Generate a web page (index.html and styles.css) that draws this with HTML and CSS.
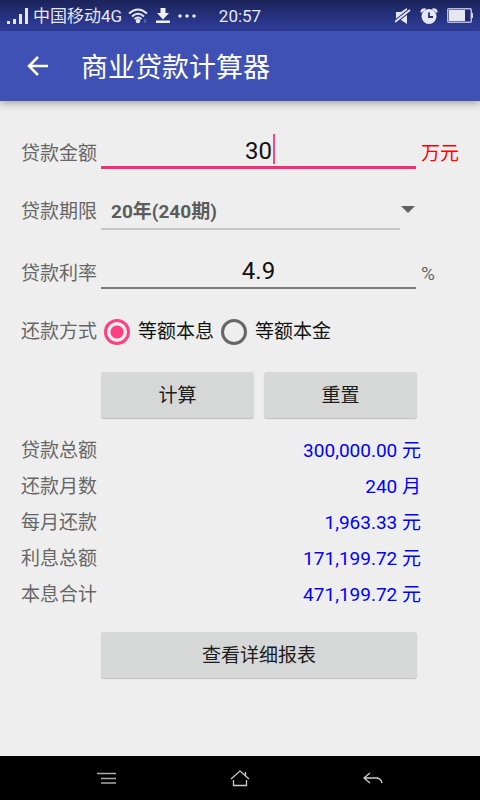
FILE: index.html
```html
<!DOCTYPE html>
<html lang="zh-CN">
<head>
<meta charset="utf-8">
<meta name="viewport" content="width=device-width, initial-scale=1">
<title>商业贷款计算器</title>
<link rel="stylesheet" href="styles.css">
</head>
<body>
<div class="status-bar">
  <div class="status-left">
    <svg width="22" height="16" viewBox="0 0 22 16" fill="#e6e7f4" aria-hidden="true"><path d="M0 13h3v3H0zM6 11h3v5H6zM12 6h3v10h-3zM18 0h3v16h-3z"/></svg>
    <span class="carrier">中国移动4G</span>
    <svg width="20" height="16" viewBox="0 0 20 16" fill="none" stroke="#e6e7f4" stroke-width="2" aria-hidden="true"><path d="M1 5.500Q10-2.500 19 5.500M4 8.500Q10 3 16 8.500M6.500 11Q10 8 13.500 11"/><circle cx="10" cy="13" r="2.300" fill="#e6e7f4" stroke="none"/><path d="M16 12h2M16 14h2" stroke="#7f86bd" stroke-width="1"/></svg>
    <svg width="14" height="15" viewBox="0 0 14 15" fill="#f0f1fa" aria-hidden="true"><path d="M4.500 0h5v5H13l-6 6.500L1 5h3.500zM0 12.500h14V15H0z"/></svg>
    <svg width="18" height="4" viewBox="0 0 18 4" fill="#e6e7f4" aria-hidden="true"><circle cx="2" cy="2" r="1.800"/><circle cx="9" cy="2" r="1.800"/><circle cx="16" cy="2" r="1.800"/></svg>
  </div>
  <span class="clock">20:57</span>
  <div class="status-right">
    <svg width="16" height="16" viewBox="0 0 16 16" aria-hidden="true"><path d="M1 4h5l6-4v16l-6-4H1z" fill="#e6e7f4"/><path d="M0 14 15 2" stroke="#26307c" stroke-width="4"/><path d="M0 14 15 2" stroke="#e6e7f4" stroke-width="1.800"/></svg>
    <svg width="18" height="16" viewBox="0 0 18 16" aria-hidden="true"><path d="M1.500 4.500Q1.500 1 5.500 1.500M16.500 4.500Q16.500 1 12.500 1.500" fill="none" stroke="#e6e7f4" stroke-width="2.400"/><circle cx="9" cy="8.500" r="7.500" fill="#e6e7f4"/><path d="M9 4.500v4.500h4" fill="none" stroke="#26307c" stroke-width="1.800"/></svg>
    <svg width="26" height="15" viewBox="0 0 26 15" aria-hidden="true"><rect x=".75" y=".75" width="23.500" height="13.500" rx="1" fill="#202a74" stroke="#b9bcda" stroke-width="1.500"/><path d="M2 2h16v11H2z" fill="#e6e7f0"/><path d="M24 5h2v5h-2z" fill="#d4d6e8"/></svg>
  </div>
</div>
<header class="app-bar">
  <button class="back" type="button" aria-label="返回"><svg width="22" height="20" viewBox="0 0 22 20" fill="none" stroke="#fff" stroke-width="2.500" aria-hidden="true"><path d="M21 10H2M11 1 2 10l9 9"/></svg></button>
  <h1>商业贷款计算器</h1>
</header>
<main>
  <form>
    <div class="row">
      <label class="name low" for="amount">贷款金额</label>
      <div class="control focused"><input class="text-box" id="amount" type="text" inputmode="decimal" value="30"><span class="caret"></span></div>
      <span class="unit alert">万元</span>
    </div>
    <div class="row">
      <label class="name" for="term">贷款期限</label>
      <div class="control spinner">
        <select id="term"><option>20年(240期)</option></select>
        <svg class="arrow" width="14" height="7" viewBox="0 0 14 7" aria-hidden="true"><path d="M0 0h14L7 7z" fill="#616161"/></svg>
      </div>
    </div>
    <div class="row">
      <label class="name low" for="rate">贷款利率</label>
      <div class="control"><input class="text-box" id="rate" type="text" inputmode="decimal" value="4.9"></div>
      <span class="unit">%</span>
    </div>
    <div class="row" role="radiogroup" aria-labelledby="method">
      <span class="name" id="method">还款方式</span>
      <div class="choices">
        <label><input type="radio" name="method" checked>等额本息</label>
        <label><input type="radio" name="method">等额本金</label>
      </div>
    </div>
    <div class="actions">
      <button class="button" type="button">计算</button>
      <button class="button" type="reset">重置</button>
    </div>
  </form>
  <table>
    <tbody>
      <tr><th scope="row">贷款总额</th><td>300,000.00 元</td></tr>
      <tr><th scope="row">还款月数</th><td>240 月</td></tr>
      <tr><th scope="row">每月还款</th><td>1,963.33 元</td></tr>
      <tr><th scope="row">利息总额</th><td>171,199.72 元</td></tr>
      <tr><th scope="row">本息合计</th><td>471,199.72 元</td></tr>
    </tbody>
  </table>
  <div class="actions report">
    <button class="button" type="button">查看详细报表</button>
  </div>
</main>
<nav>
  <button type="button" aria-label="菜单"><svg width="20" height="12" viewBox="0 0 20 12" fill="none" stroke="#aaa" aria-hidden="true"><path d="M0 1.500h19M4 6.500h15M4 11h15" stroke-width="1.300"/></svg></button>
  <button type="button" aria-label="主页"><svg width="20" height="17" viewBox="0 0 20 17" fill="none" stroke="#ccc" stroke-width="1.300" aria-hidden="true"><path d="M1 9 10 1l9 8M15.500 2v4M3.500 10v5.500h13V10"/></svg></button>
  <button type="button" aria-label="返回上一页"><svg width="20" height="12" viewBox="0 0 20 12" fill="none" stroke="#ccc" stroke-width="1.300" aria-hidden="true"><path d="M7 1 1 6l6 5M1 6h12q5 0 6 5"/></svg></button>
</nav>
</body>
</html>
```
FILE: styles.css
```css
* {
  box-sizing: border-box;
}

body {
  margin: 0;
  min-height: 100vh;
  display: flex;
  flex-direction: column;
  background: #eee;
  color: #666;
  font: 19px/28px Roboto, "Noto Sans CJK SC", sans-serif;
}

button, input, select {
  font: inherit;
  margin: 0;
}

svg {
  display: block;
  flex: none;
}

.status-bar {
  display: grid;
  grid-template-columns: 1fr auto 1fr;
  align-items: center;
  height: 31px;
  padding: 0 7px;
  background: linear-gradient(#1b2359, #303f9f);
  color: #e6e7f4;
  font-size: 17px;
  line-height: 29px;
}

.status-left, .status-right {
  display: flex;
  align-items: center;
}

.status-left {
  gap: 8px;
}

.carrier {
  margin: 0 -2px 0 -4px;
  white-space: nowrap;
}

.carrier, .clock {
  padding-top: 2px;
}

.status-right {
  justify-content: flex-end;
  gap: 9px;
}

.app-bar {
  display: flex;
  align-items: center;
  gap: 32px;
  height: 70px;
  padding: 0 27px;
  background: #3f51b5;
  box-shadow: 0 2px 8px rgba(0, 0, 0, .35);
  color: #fff;
}

.back {
  padding: 0;
  border: 0;
  background: none;
}

h1 {
  margin: 0;
  padding-top: 4px;
  font-size: 27px;
  font-weight: 400;
  line-height: 36px;
}

main {
  flex: 1;
  padding: 30px 21px;
}

form {
  display: grid;
  gap: 22px;
}

.row {
  display: grid;
  grid-template-columns: 80px 1fr 43px;
  align-items: center;
  height: 38px;
}

.name, .choices {
  padding-top: 4px;
}

.low, .unit {
  padding-top: 8px;
}

.unit {
  padding-left: 5px;
}

.alert {
  color: #f00;
}

.control {
  position: relative;
  height: 38px;
  border-bottom: 2px solid #7a7a7a;
}

.focused {
  border-bottom: 3px solid #ff2a77;
}

.text-box {
  width: 100%;
  height: 100%;
  padding: 4px 0 0;
  border: 0;
  outline: 0;
  background: none;
  color: #111;
  font-size: 24px;
  text-align: center;
}

.caret {
  position: absolute;
  left: calc(50% + 14px);
  top: 3px;
  width: 2px;
  height: 30px;
  background: #ff4081;
}

.spinner {
  border: 0;
}

select {
  appearance: none;
  width: calc(100% - 16px);
  height: 39px;
  padding: 4px 10px 0;
  border: 0;
  border-bottom: 2px solid #c8c8c8;
  border-radius: 0;
  background: none;
  color: #5c5c5c;
  font-weight: 700;
}

.arrow {
  position: absolute;
  right: 1px;
  top: 15px;
}

.choices, .choices label {
  display: flex;
  align-items: center;
}

.choices {
  gap: 7px;
  padding-left: 3px;
  color: #111;
  white-space: nowrap;
}

.choices label {
  gap: 8px;
}

input[type="radio"] {
  appearance: none;
  width: 26px;
  height: 26px;
  border: 3px solid #666;
  border-radius: 50%;
}

input[type="radio"]:checked {
  border-color: #ff4081;
  background: radial-gradient(circle, #ff4081 6px, transparent 7px);
}

.actions {
  display: flex;
  gap: 10px;
  margin: 1px 42px 0 80px;
}

.button {
  flex: 1;
  height: 46px;
  padding: 2px 0 0;
  border: 0;
  border-radius: 3px;
  background: #d6d7d7;
  box-shadow: 0 1px 1px rgba(0, 0, 0, .2);
  color: #1c1c1c;
}

table {
  width: calc(100% - 38px);
  margin-top: 14px;
  border-collapse: collapse;
}

th, td {
  height: 36px;
  padding: 2px 0 0;
  font-weight: 400;
}

th {
  text-align: left;
}

td {
  color: #00f;
  text-align: right;
}

.report {
  margin-top: 20px;
}

nav {
  display: grid;
  grid-template-columns: repeat(3, 133px);
  justify-content: center;
  height: 44px;
  background: #000;
}

nav button {
  display: grid;
  place-items: center;
  border: 0;
  padding: 0;
  background: none;
}
```
